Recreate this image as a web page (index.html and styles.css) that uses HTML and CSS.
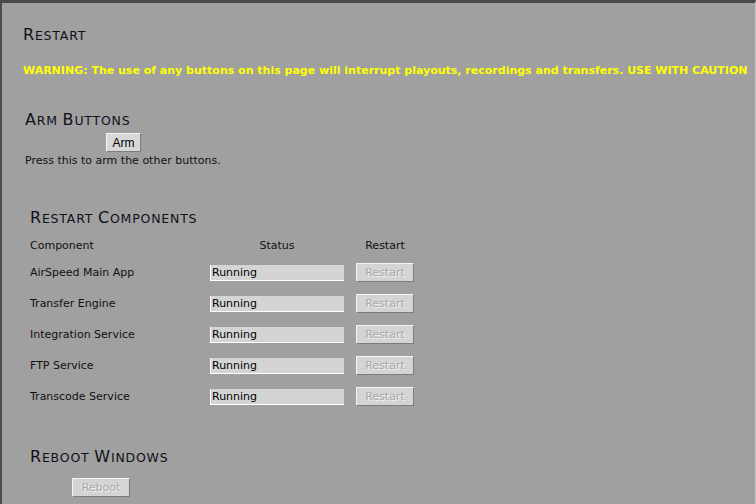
FILE: index.html
```html
<!DOCTYPE html>
<html>
<head>
<meta charset="utf-8">
<title>Restart</title>
<link rel="stylesheet" href="styles.css">
</head>
<body>
<div class="frame">
  <h1 class="title"><span class="cap">R</span>estart</h1>
  <p class="warning">WARNING: The use of any buttons on this page will interrupt playouts, recordings and transfers. USE WITH CAUTION</p>

  <section class="arm">
    <h2 class="heading"><span class="cap">A</span>rm <span class="cap">B</span>uttons</h2>
    <button class="btn arm-btn">Arm</button>
    <p class="note">Press this to arm the other buttons.</p>
  </section>

  <section class="components">
    <h2 class="heading"><span class="cap">R</span>estart <span class="cap">C</span>omponents</h2>
    <div class="grid">
      <div class="hdr">Component</div>
      <div class="hdr center">Status</div>
      <div class="hdr center">Restart</div>

      <div class="cell">AirSpeed Main App</div>
      <div class="cell"><div class="status">Running</div></div>
      <div class="cell"><button class="btn disabled" disabled>Restart</button></div>

      <div class="cell">Transfer Engine</div>
      <div class="cell"><div class="status">Running</div></div>
      <div class="cell"><button class="btn disabled" disabled>Restart</button></div>

      <div class="cell">Integration Service</div>
      <div class="cell"><div class="status">Running</div></div>
      <div class="cell"><button class="btn disabled" disabled>Restart</button></div>

      <div class="cell">FTP Service</div>
      <div class="cell"><div class="status">Running</div></div>
      <div class="cell"><button class="btn disabled" disabled>Restart</button></div>

      <div class="cell">Transcode Service</div>
      <div class="cell"><div class="status">Running</div></div>
      <div class="cell"><button class="btn disabled" disabled>Restart</button></div>
    </div>
  </section>

  <section class="reboot">
    <h2 class="heading"><span class="cap">R</span>eboot <span class="cap">W</span>indows</h2>
    <button class="btn disabled reboot-btn" disabled>Reboot</button>
  </section>
</div>
</body>
</html>
```

FILE: styles.css
```css
html, body {
  margin: 0;
  padding: 0;
  background: #a0a0a0;
}
body {
  font-family: "DejaVu Sans", Verdana, sans-serif;
  color: #111;
}
.frame {
  box-sizing: border-box;
  width: 756px;
  height: 504px;
  overflow: hidden;
  background: #a0a0a0;
  border-top: 3px solid #4a4a4a;
  border-left: 2px solid #4a4a4a;
  border-right: 1px solid #c6c6c6;
  padding-top: 23px;
}
.title,
.heading {
  margin: 0;
  height: 20px;
  font-size: 12.5px;
  line-height: 20px;
  font-weight: normal;
  text-transform: uppercase;
  letter-spacing: 0.8px;
  color: #10101a;
}
.cap {
  font-size: 16px;
  line-height: 14px;
}
.title {
  margin-left: 21px;
}
.warning {
  margin: 18px 0 0 21px;
  font-size: 11px;
  line-height: 14px;
  font-weight: bold;
  color: #ffff00;
  white-space: nowrap;
}
.arm {
  margin: 33px 0 0 23px;
}
.btn {
  display: block;
  box-sizing: border-box;
  height: 19px;
  padding: 0;
  background: #d8d8d8;
  border: 1px solid;
  border-color: #f4f4f4 #7c7c7c #7c7c7c #f4f4f4;
  font-family: "Liberation Sans", Arial, sans-serif;
  font-size: 12px;
  color: #000;
}
.arm-btn {
  margin: 2px 0 0 81px;
  width: 35px;
}
.note {
  margin: 2px 0 0 0;
  font-size: 11px;
  line-height: 14px;
}
.components {
  margin: 41px 0 0 28px;
}
.grid {
  margin-top: 2px;
  display: grid;
  grid-template-columns: 180px 146px 58px;
  grid-template-rows: 26px repeat(5, 31px);
  align-items: center;
  font-size: 11px;
  line-height: 14px;
}
.hdr {
  padding-top: 3px;
}
.center {
  text-align: center;
}
.hdr.center:nth-child(2) {
  width: 134px;
}
.status {
  box-sizing: border-box;
  width: 134px;
  height: 16px;
  background: #d4d4d4;
  border-left: 1px solid #fff;
  border-bottom: 1px solid #fff;
  padding-left: 1px;
  line-height: 16px;
  color: #000;
}
.btn.disabled {
  width: 58px;
  background: #d4d4d4;
  color: #a9a9a9;
  text-shadow: 1px 1px 0 #f2f2f2;
  font-family: "DejaVu Sans", Verdana, sans-serif;
  font-size: 11px;
}
.reboot {
  margin: 36px 0 0 28px;
}
.reboot-btn {
  margin: 10px 0 0 42px;
  width: 57px;
}
```
